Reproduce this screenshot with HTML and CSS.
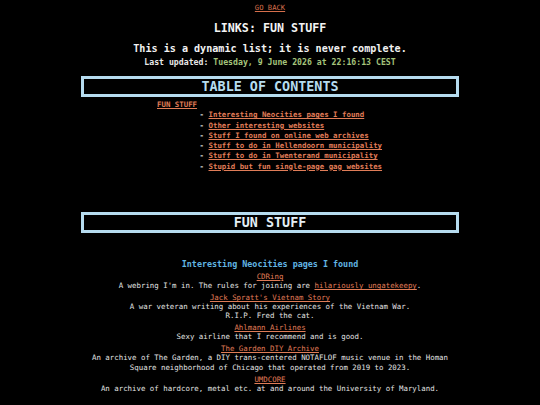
FILE: index.html
```html
<!DOCTYPE html>
<html>
<head>
<meta charset="utf-8">
<link rel="stylesheet" href="styles.css">
</head>
<body>
<div class="page">
  <div class="back"><a href="#">GO BACK</a></div>
  <h1 class="title">LINKS: FUN STUFF</h1>
  <p class="dynamic">This is a dynamic list; it is never complete.</p>
  <p class="updated">Last updated: <span class="date">Tuesday, 9 June 2026 at 22:16:13 CEST</span></p>

  <h2 class="box toc-head">TABLE OF CONTENTS</h2>
  <div class="toc">
    <div class="toc-top"><a href="#">FUN STUFF</a></div>
    <ul class="toc-list">
      <li><a href="#">Interesting Neocities pages I found</a></li>
      <li><a href="#">Other interesting websites</a></li>
      <li><a href="#">Stuff I found on online web archives</a></li>
      <li><a href="#">Stuff to do in Hellendoorn municipality</a></li>
      <li><a href="#">Stuff to do in Twenterand municipality</a></li>
      <li><a href="#">Stupid but fun single-page gag websites</a></li>
    </ul>
  </div>

  <h2 class="box fun-head">FUN STUFF</h2>

  <h3 class="sub">Interesting Neocities pages I found</h3>
  <div class="entries">
    <div class="entry">
      <a class="name" href="#">CDRing</a>
      <p class="desc">A webring I'm in. The rules for joining are <a href="#">hilariously ungatekeepy</a>.</p>
    </div>
    <div class="entry">
      <a class="name" href="#">Jack Spratt's Vietnam Story</a>
      <p class="desc">A war veteran writing about his experiences of the Vietnam War.<br>R.I.P. Fred the cat.</p>
    </div>
    <div class="entry">
      <a class="name" href="#">Ahlmann Airlines</a>
      <p class="desc">Sexy airline that I recommend and is good.</p>
    </div>
    <div class="entry">
      <a class="name" href="#">The Garden DIY Archive</a>
      <p class="desc">An archive of The Garden, a DIY trans-centered NOTAFLOF music venue in the Homan<br>Square neighborhood of Chicago that operated from 2019 to 2023.</p>
    </div>
    <div class="entry">
      <a class="name" href="#">UMDCORE</a>
      <p class="desc">An archive of hardcore, metal etc. at and around the University of Maryland.</p>
    </div>
  </div>
</div>
</body>
</html>
```

FILE: styles.css
```css
html, body {
  margin: 0;
  padding: 0;
  background: #000;
}
body {
  font-family: "DejaVu Sans Mono", monospace;
  color: #e6e6e6;
}
a {
  color: #e07d58;
  text-decoration: underline;
}
.page {
  text-align: center;
}
.back {
  padding-top: 3px;
  font-size: 7.2px;
  line-height: 10px;
}
.back a {
  color: #d66f4c;
}
.title {
  margin: 8px 0 0;
  font-size: 11.7px;
  line-height: 14px;
  font-weight: bold;
  color: #f4f4f4;
}
.dynamic {
  margin: 8px 0 0;
  font-size: 10.1px;
  line-height: 12px;
  font-weight: bold;
  color: #f2f2f2;
}
.updated {
  margin: 2px 0 0;
  font-size: 8.2px;
  line-height: 10px;
  font-weight: bold;
  color: #e8e8e8;
}
.date {
  color: #a5c47c;
}
.box {
  width: 372px;
  margin: 9px auto 0;
  border: 3px solid #b6dcef;
  font-size: 13.4px;
  line-height: 15px;
  font-weight: bold;
  text-align: center;
}
.toc-head {
  color: #b6dcef;
}
.fun-head {
  margin-top: 39.5px;
  color: #e4eff6;
}
.toc {
  margin-top: 2.5px;
  text-align: left;
  font-size: 7.4px;
  line-height: 10.3px;
  font-weight: bold;
}
.toc-top {
  padding-left: 157px;
}
.toc-list {
  list-style: none;
  margin: 0.5px 0 0;
  padding: 0 0 0 199.6px;
}
.toc-list li::before {
  content: "- ";
  color: #e6e6e6;
}
.sub {
  margin: 26.5px 0 0;
  font-size: 8.4px;
  line-height: 10px;
  font-weight: bold;
  color: #62b6e4;
}
.entries {
  margin-top: 3px;
  font-size: 7.4px;
}
.entry {
  display: flex;
  flex-direction: column;
  align-items: center;
  margin-bottom: 3px;
}
.name {
  line-height: 9.05px;
}
.desc {
  margin: 0;
  line-height: 9.05px;
  color: #e2e2e2;
}
```
